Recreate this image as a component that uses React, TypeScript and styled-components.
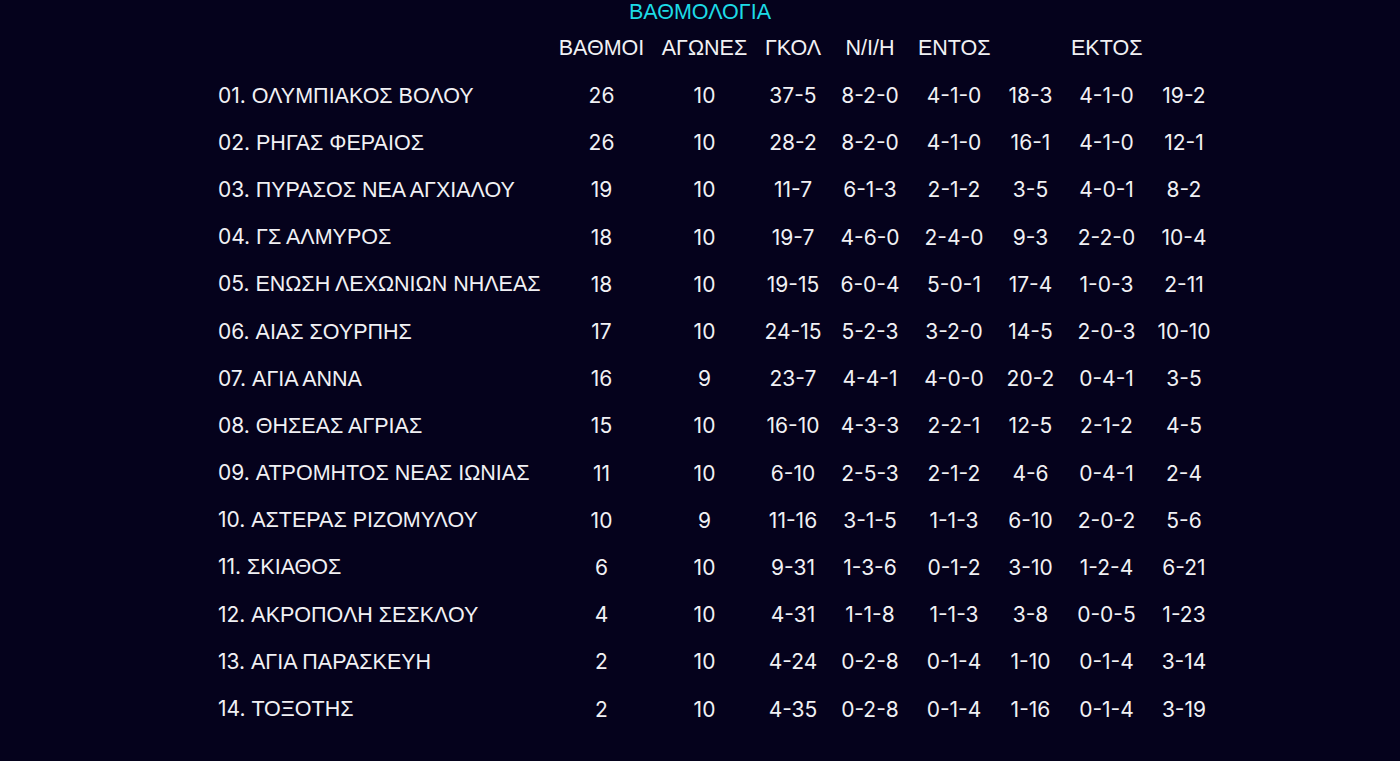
import { ReactElement } from "react"
import styled, { createGlobalStyle } from "styled-components"

type Team = {
	name: string
	points: number
	played: number
	goals: string
	record: string
	home: string
	homeGoals: string
	away: string
	awayGoals: string
}

const teams: Team[] = [
	{ name: "ΟΛΥΜΠΙΑΚΟΣ ΒΟΛΟΥ", points: 26, played: 10, goals: "37-5", record: "8-2-0", home: "4-1-0", homeGoals: "18-3", away: "4-1-0", awayGoals: "19-2" },
	{ name: "ΡΗΓΑΣ ΦΕΡΑΙΟΣ", points: 26, played: 10, goals: "28-2", record: "8-2-0", home: "4-1-0", homeGoals: "16-1", away: "4-1-0", awayGoals: "12-1" },
	{ name: "ΠΥΡΑΣΟΣ ΝΕΑ ΑΓΧΙΑΛΟΥ", points: 19, played: 10, goals: "11-7", record: "6-1-3", home: "2-1-2", homeGoals: "3-5", away: "4-0-1", awayGoals: "8-2" },
	{ name: "ΓΣ ΑΛΜΥΡΟΣ", points: 18, played: 10, goals: "19-7", record: "4-6-0", home: "2-4-0", homeGoals: "9-3", away: "2-2-0", awayGoals: "10-4" },
	{ name: "ΕΝΩΣΗ ΛΕΧΩΝΙΩΝ ΝΗΛΕΑΣ", points: 18, played: 10, goals: "19-15", record: "6-0-4", home: "5-0-1", homeGoals: "17-4", away: "1-0-3", awayGoals: "2-11" },
	{ name: "ΑΙΑΣ ΣΟΥΡΠΗΣ", points: 17, played: 10, goals: "24-15", record: "5-2-3", home: "3-2-0", homeGoals: "14-5", away: "2-0-3", awayGoals: "10-10" },
	{ name: "ΑΓΙΑ ΑΝΝΑ", points: 16, played: 9, goals: "23-7", record: "4-4-1", home: "4-0-0", homeGoals: "20-2", away: "0-4-1", awayGoals: "3-5" },
	{ name: "ΘΗΣΕΑΣ ΑΓΡΙΑΣ", points: 15, played: 10, goals: "16-10", record: "4-3-3", home: "2-2-1", homeGoals: "12-5", away: "2-1-2", awayGoals: "4-5" },
	{ name: "ΑΤΡΟΜΗΤΟΣ ΝΕΑΣ ΙΩΝΙΑΣ", points: 11, played: 10, goals: "6-10", record: "2-5-3", home: "2-1-2", homeGoals: "4-6", away: "0-4-1", awayGoals: "2-4" },
	{ name: "ΑΣΤΕΡΑΣ ΡΙΖΟΜΥΛΟΥ", points: 10, played: 9, goals: "11-16", record: "3-1-5", home: "1-1-3", homeGoals: "6-10", away: "2-0-2", awayGoals: "5-6" },
	{ name: "ΣΚΙΑΘΟΣ", points: 6, played: 10, goals: "9-31", record: "1-3-6", home: "0-1-2", homeGoals: "3-10", away: "1-2-4", awayGoals: "6-21" },
	{ name: "ΑΚΡΟΠΟΛΗ ΣΕΣΚΛΟΥ", points: 4, played: 10, goals: "4-31", record: "1-1-8", home: "1-1-3", homeGoals: "3-8", away: "0-0-5", awayGoals: "1-23" },
	{ name: "ΑΓΙΑ ΠΑΡΑΣΚΕΥΗ", points: 2, played: 10, goals: "4-24", record: "0-2-8", home: "0-1-4", homeGoals: "1-10", away: "0-1-4", awayGoals: "3-14" },
	{ name: "ΤΟΞΟΤΗΣ", points: 2, played: 10, goals: "4-35", record: "0-2-8", home: "0-1-4", homeGoals: "1-16", away: "0-1-4", awayGoals: "3-19" },
]

const columns = [340, 103, 103, 74, 80, 88, 65, 87, 68]
const headers = ["", "ΒΑΘΜΟΙ", "ΑΓΩΝΕΣ", "ΓΚΟΛ", "Ν/Ι/Η", "ΕΝΤΟΣ", "", "ΕΚΤΟΣ", ""]

const GlobalStyle = createGlobalStyle`
	html, body {
		margin: 0;
		background: #05021c;
	}
	body {
		font-family: "Liberation Sans", Arial, sans-serif;
		color: #f1f1f4;
	}
`

const Standings = (): ReactElement => (
	<S.Page>
		<GlobalStyle />
		<S.Title>ΒΑΘΜΟΛΟΓΙΑ</S.Title>
		<S.Wrap>
			<S.Table>
				<colgroup>
					{columns.map((w, i) => (
						<col key={i} style={{ width: w }} />
					))}
				</colgroup>
				<thead>
					<S.HeadRow>
						{headers.map((h, i) => (
							<S.Head key={i}>{h}</S.Head>
						))}
					</S.HeadRow>
				</thead>
				<tbody>
					{teams.map((t, i) => (
						<S.Row key={t.name}>
							<S.Name>
								<S.Rank>{String(i + 1).padStart(2, "0")}. </S.Rank>
								{t.name}
							</S.Name>
							<S.Cell>{t.points}</S.Cell>
							<S.Cell>{t.played}</S.Cell>
							<S.Cell>{t.goals}</S.Cell>
							<S.Cell>{t.record}</S.Cell>
							<S.Cell>{t.home}</S.Cell>
							<S.Cell>{t.homeGoals}</S.Cell>
							<S.Cell>{t.away}</S.Cell>
							<S.Cell>{t.awayGoals}</S.Cell>
						</S.Row>
					))}
				</tbody>
			</S.Table>
		</S.Wrap>
	</S.Page>
)

export const S = {
	Page: styled.div`
		min-height: 761px;
		background: #05021c;
	`,
	Title: styled.h2`
		margin: 0;
		font-size: 21.5px;
		font-weight: 400;
		line-height: 24px;
		text-align: center;
		color: #1ddbe6;
	`,
	Wrap: styled.div`
		display: flex;
		justify-content: center;
		padding-left: 28px;
	`,
	Table: styled.table`
		width: 1008px;
		table-layout: fixed;
		border-collapse: collapse;
		font-size: 21.5px;
	`,
	HeadRow: styled.tr`
		height: 48px;
	`,
	Row: styled.tr`
		height: 47.2px;
	`,
	Head: styled.th`
		padding: 0 8px;
		font-weight: 400;
		text-align: center;
		white-space: nowrap;
	`,
	Name: styled.td`
		padding: 0 8px;
		text-align: left;
		white-space: nowrap;
	`,
	Rank: styled.span`
		font-family: Inter, "Liberation Sans", sans-serif;
		font-size: 21px;
	`,
	Cell: styled.td`
		padding: 0;
		text-align: center;
		white-space: nowrap;
		font-size: 21px;
		font-family: Inter, "Liberation Sans", sans-serif;
	`,
}

export default Standings
